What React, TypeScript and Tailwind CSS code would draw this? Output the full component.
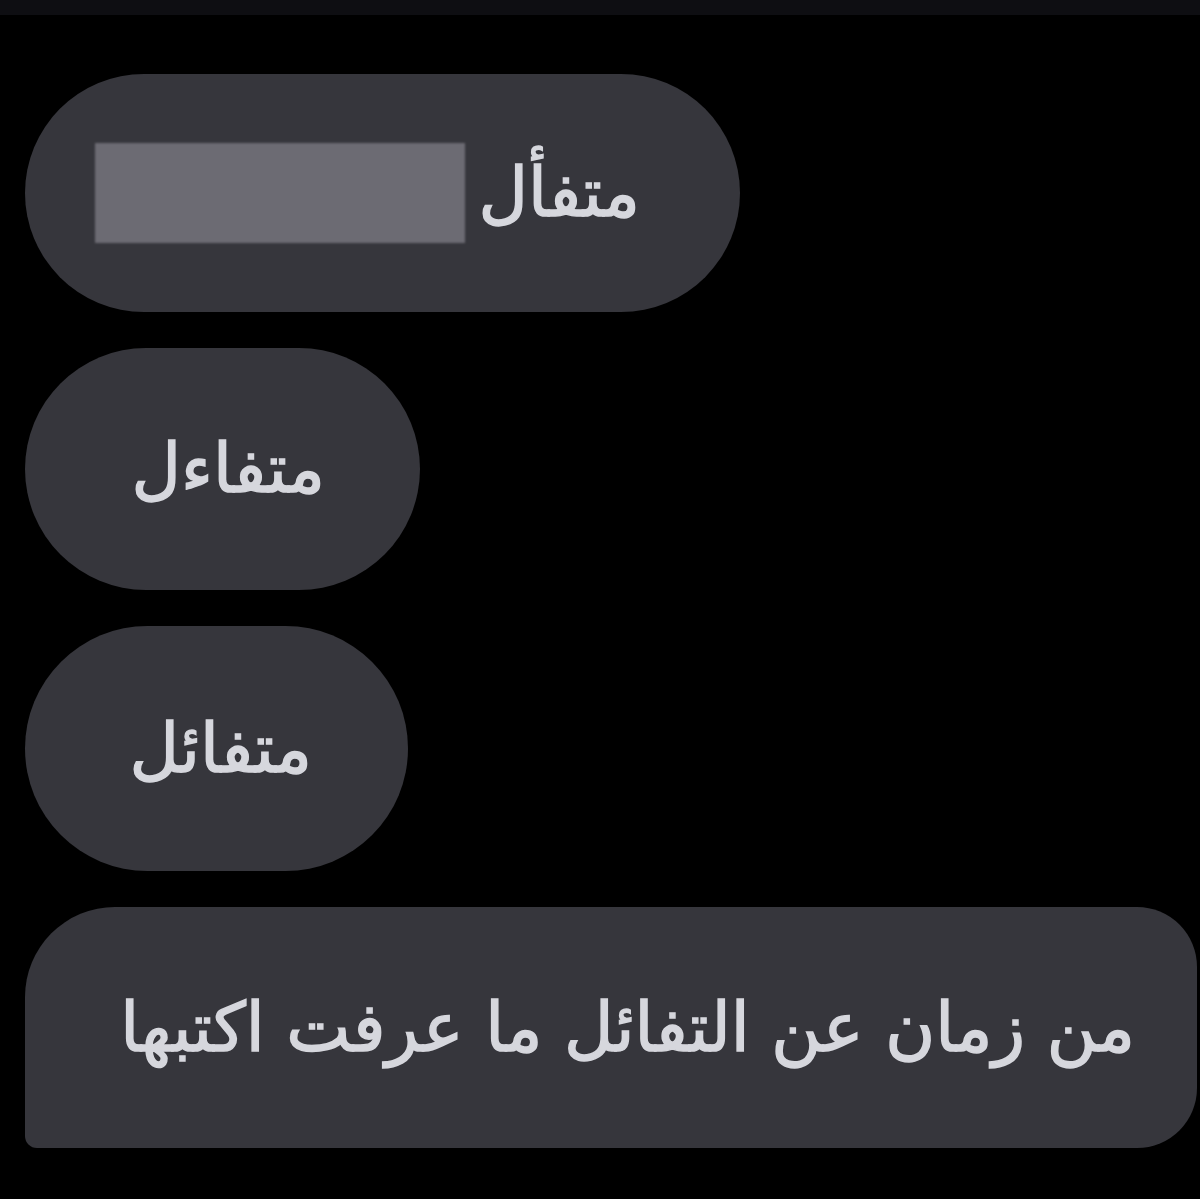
const FONT = { fontFamily: '"DejaVu Sans", "Noto Sans", sans-serif' };

/** A single grey chat bubble, text sitting at its right end. */
function Bubble({
  text,
  className,
  children,
}: {
  text: string;
  className: string;
  children?: React.ReactNode;
}) {
  return (
    <div className={`flex items-center bg-[#36363c] shrink-0 ${className}`}>
      {children}
      <span
        dir="rtl"
        className="ml-auto text-[68px] leading-none text-[#d6d7dd] whitespace-nowrap [-webkit-text-stroke:1.5px_#d6d7dd]"
        style={FONT}
      >
        {text}
      </span>
    </div>
  );
}

export default function App() {
  return (
    <div className="w-[1200px] h-[1199px] bg-black overflow-hidden">
      {/* status strip */}
      <div className="h-[15px] bg-[#0e0e12]" />

      <div className="flex flex-col items-start gap-[36px] pt-[59px] pl-[25px]">
        <Bubble text="متفأل" className="w-[715px] h-[238px] rounded-full pl-[70px] pr-[100px]">
          <div className="w-[370px] h-[100px] bg-[#6c6b73] blur-[1px]" />
        </Bubble>

        <Bubble text="متفاءل" className="w-[395px] h-[242px] rounded-full pr-[95px]" />

        <Bubble text="متفائل" className="w-[383px] h-[245px] rounded-full pr-[96px]" />

        <Bubble
          text="من زمان عن التفائل ما عرفت اكتبها"
          className="w-[1172px] h-[241px] rounded-tl-[90px] rounded-bl-[12px] rounded-tr-[60px] rounded-br-[60px] pr-[62px]"
        />
      </div>
    </div>
  );
}
